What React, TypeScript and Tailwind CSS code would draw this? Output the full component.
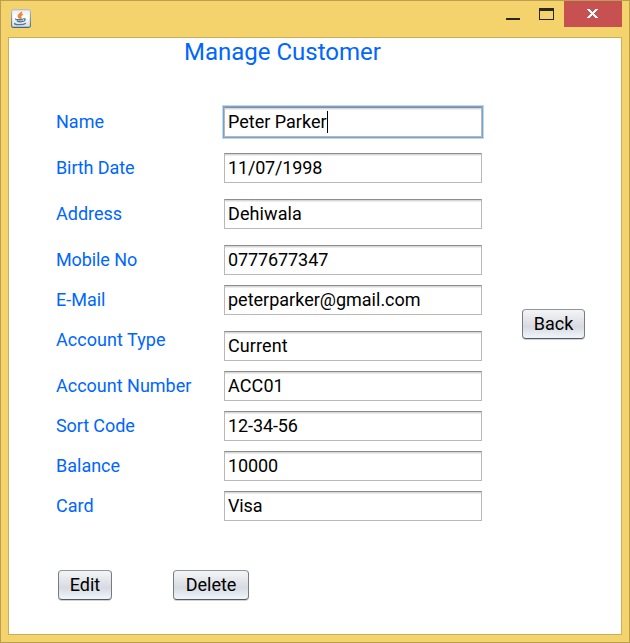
type Row = { label: string; value: string; gap: string; labelClass?: string; textClass?: string; focused?: boolean };

const rows: Row[] = [
  { label: "Name", value: "Peter Parker", gap: "", focused: true },
  { label: "Birth Date", value: "11/07/1998", gap: "mt-4", labelClass: "tracking-[-0.1px]", textClass: "tracking-[-0.17px]" },
  { label: "Address", value: "Dehiwala", gap: "mt-4", textClass: "tracking-[0.1px]" },
  { label: "Mobile No", value: "0777677347", gap: "mt-4", labelClass: "tracking-[-0.1px]", textClass: "tracking-[-0.1px]" },
  { label: "E-Mail", value: "peterparker@gmail.com", gap: "mt-2.5" },
  { label: "Account Type", value: "Current", gap: "mt-4", labelClass: "-mt-1.5 tracking-[0.05px]", textClass: "tracking-[0.1px]" },
  { label: "Account Number", value: "ACC01", gap: "mt-2.5", textClass: "tracking-[0.1px]" },
  { label: "Sort Code", value: "12-34-56", gap: "mt-2.5", labelClass: "tracking-[-0.1px]", textClass: "tracking-[-0.1px]" },
  { label: "Balance", value: "10000", gap: "mt-2.5", textClass: "tracking-[-0.1px]" },
  { label: "Card", value: "Visa", gap: "mt-2.5", textClass: "tracking-[-0.15px]" },
];

function JavaIcon() {
  return (
    <svg width="20" height="19" viewBox="0 0 20 19" className="mt-[9px] ml-[11px]">
      <defs>
        <linearGradient id="tile" x1="0" y1="0" x2="0" y2="1">
          <stop offset="0" stopColor="#e9eaec" />
          <stop offset="0.4" stopColor="#ffffff" />
          <stop offset="1" stopColor="#d6dade" />
        </linearGradient>
        <linearGradient id="edge" x1="0" y1="0" x2="0" y2="1">
          <stop offset="0" stopColor="#b9bfc4" />
          <stop offset="1" stopColor="#456887" />
        </linearGradient>
      </defs>
      <rect x="0.6" y="0.6" width="18.8" height="17.8" rx="1.6" fill="url(#tile)" stroke="url(#edge)" strokeWidth="1.1" />
      <path d="M10.4 2.8c.7 1.7-3.3 2.5-3 4.4.1 1 1.4 1.5 1.7 2.3M11.8 5.2c-1.5.6-2.8 1.2-2.4 2.4.3.7 1.1 1.1.1 2.3" fill="none" stroke="#ee8232" strokeWidth="1.7" />
      <path d="M5.1 9.8c-1.7 1.1 2.9 1.3 6.9.5M5.9 12.2c2 .7 4.5.6 6.2 0M12.3 9.6c2.7-.3 2.2 2.4-.3 2.8M4.3 14c-3.4 1.7 7.2 2.6 10.6.3" fill="none" stroke="#50789a" strokeWidth="1.35" />
    </svg>
  );
}

function Button({ children, className }: { children: string; className: string }) {
  return (
    <button
      className={`h-[30px] rounded-[4px] border border-[#767b82] border-t-[#939699] border-b-[#555a61] bg-linear-to-b from-[#f4f5f6] via-[#d7dae1] via-60% to-[#f0f5fc] text-center text-[18px] leading-[28px] text-black shadow-[0_1px_0_#d0d2d4] ${className}`}
    >
      {children}
    </button>
  );
}

export default function App() {
  return (
    <div className="flex h-[643px] w-[630px] flex-col border border-[#b99f53] bg-[#f5d36c] font-[Roboto,sans-serif]">
      <header className="-mt-px -ml-px flex h-[37px] w-[630px] shrink-0 items-start border-t border-[#b99f53]">
        <div className="-mt-px"><JavaIcon /></div>
        <svg className="-mt-px ml-auto mr-[8px]" width="116" height="27" viewBox="506 0 116 27" shapeRendering="crispEdges">
          <path d="M506 18h14v2h-14z" fill="#282723" />
          <path d="M539 8h15v12h-15zM540 11v8h13v-8z" fill="#282723" fillRule="evenodd" />
          <path d="M564 1h58v26h-58z" fill="#c75050" />
          <path d="M587 9h3v1h1v1h1v1h1v-1h1v-1h1v-1h3v1h-1v1h-1v1h-1v1h-1v1h1v1h1v1h1v1h1v1h-3v-1h-1v-1h-1v-1h-1v1h-1v1h-1v1h-3v-1h1v-1h1v-1h1v-1h1v-1h-1v-1h-1v-1h-1v-1h-1z" fill="white" />
        </svg>
      </header>
      <main className="ml-[7px] flex h-[598px] w-[614px] flex-col border border-[#c9ae5b] bg-white">
        <h1 className="h-[28px] pl-[175px] text-[24px] leading-[28px] text-[#0066ff]">Manage Customer</h1>
        <div className="mt-[41px] flex items-start">
          <div className="ml-[47px] w-[426px]">
            {rows.map((row) => (
              <div key={row.label} className={`flex h-[30px] ${row.gap}`}>
                <label className={`w-[168px] text-[18px] leading-[30px] whitespace-nowrap text-[#0066ff] ${row.labelClass ?? ""}`}>
                  {row.label}
                </label>
                <div
                  className={`flex h-[30px] w-[258px] items-center border border-[#b8b8b8] border-t-[#8d8d8d] pl-[3px] text-[18px] leading-[28px] text-black ${
                    row.focused
                      ? "shadow-[0_0_0_1px_#73a4d1,0_0_0_2px_#c1d9ee,inset_0_1px_0_#d8d8d8,inset_0_2px_0_#ececec]"
                      : "shadow-[inset_0_1px_0_#d8d8d8,inset_0_2px_0_#ececec]"
                  }`}
                >
                  <span className={row.textClass}>{row.value}</span>
                  {row.focused && <span className="h-[22px] w-px bg-black" />}
                </div>
              </div>
            ))}
          </div>
          <Button className="mt-[202px] ml-[40px] w-[63px]">Back</Button>
        </div>
        <div className="mt-[49px] ml-[49px] flex gap-[61px]">
          <Button className="w-[54px]">Edit</Button>
          <Button className="w-[76px]">Delete</Button>
        </div>
      </main>
    </div>
  );
}
